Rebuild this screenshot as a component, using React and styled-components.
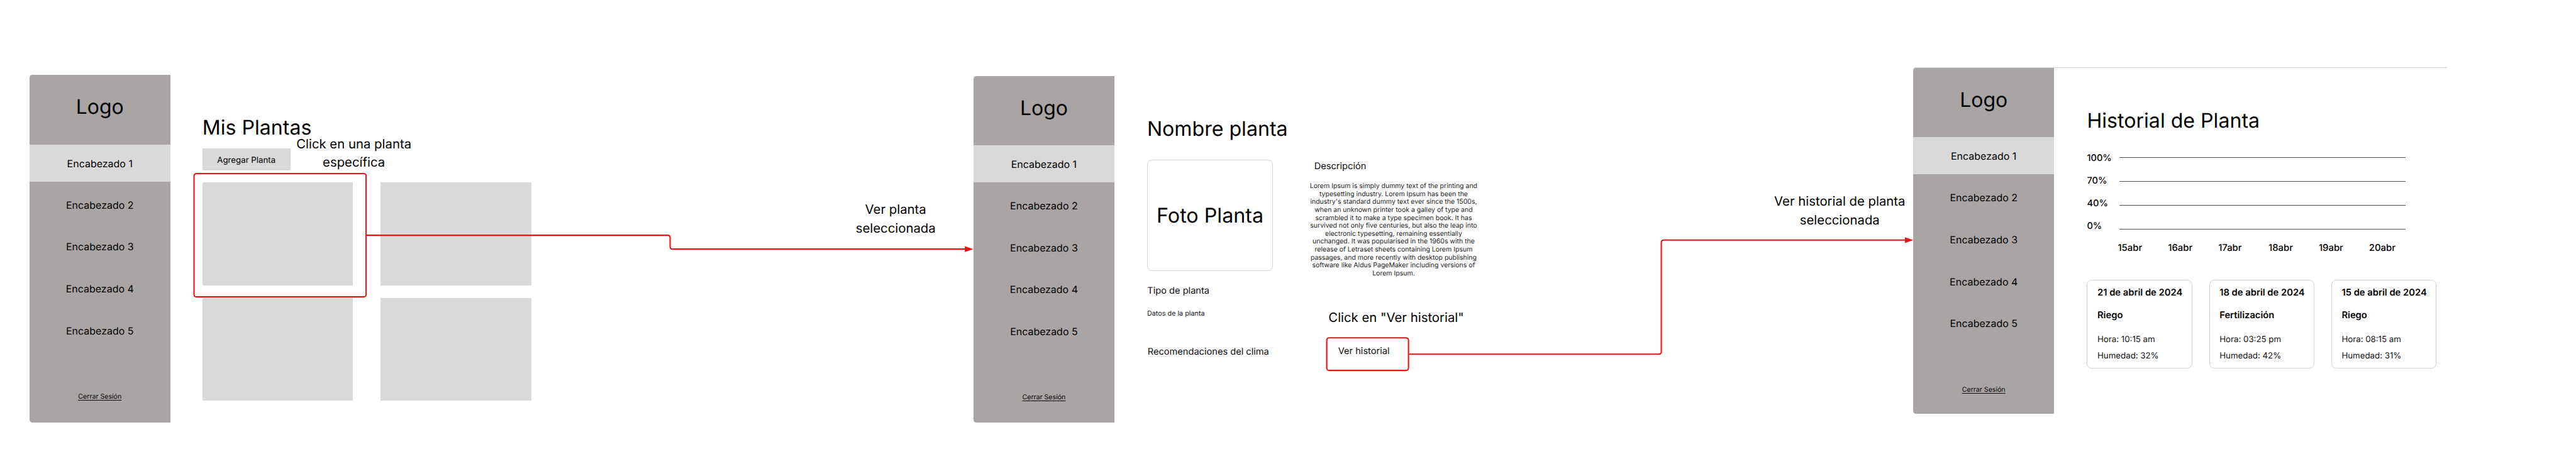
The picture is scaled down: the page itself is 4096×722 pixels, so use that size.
import React from "react";
import styled, { createGlobalStyle } from "styled-components";

/* Board units are drawn on a 6276 x 1107 canvas that fills a 4096px wide page. */
const u = (n) => `${((n * 4096) / 6276).toFixed(3)}px`;

const GlobalStyle = createGlobalStyle`
  * { box-sizing: border-box; }
  html, body { margin: 0; padding: 0; background: #fff; overflow: hidden; }
  body {
    font-family: Inter, "Liberation Sans", sans-serif;
    color: #000;
    text-rendering: geometricPrecision;
  }
  p, h1, h2, h3 { margin: 0; font-weight: 400; }
`;

const Board = styled.div`
  position: relative;
  display: flex;
  align-items: flex-start;
  width: 4096px;
  height: 722px;
  overflow: hidden;
  background: #fff;
`;

const Frame = styled.section`
  display: flex;
  flex: none;
  width: ${u(1300)};
  height: ${(p) => u(p.$height)};
  margin-top: ${(p) => u(p.$top)};
  margin-left: ${(p) => u(p.$gap)};
  border-top: ${(p) => (p.$outlined ? "1px solid #d4d4d4" : "none")};
  border-top-left-radius: ${u(7)};
`;

const SidebarPanel = styled.nav`
  display: flex;
  flex-direction: column;
  align-items: stretch;
  flex: none;
  width: ${u(342.6)};
  background: #a9a5a4;
  border-radius: ${u(7)} 0 0 ${u(7)};
  text-align: center;
`;

const Logo = styled.div`
  height: ${u(156)};
  margin-bottom: ${u(13)};
  font-size: ${u(49)};
  line-height: ${u(156)};
`;

const NavItem = styled.a`
  display: block;
  height: ${u(102)};
  font-size: ${u(24.5)};
  line-height: ${u(102)};
`;

const ActiveNavItem = styled(NavItem)`
  height: ${u(90.3)};
  margin-bottom: ${u(8.1)};
  padding-top: ${u(4.5)};
  line-height: ${u(85.8)};
  background: #d9d9d9;
`;

const Logout = styled.a`
  margin-top: ${u(98)};
  font-size: ${u(16.3)};
  line-height: ${u(20)};
  text-decoration: underline;
  text-decoration-thickness: 1px;
  text-underline-offset: 2px;
`;

const Main = styled.main`
  display: flex;
  flex-direction: column;
  align-items: flex-start;
  padding: ${u(98)} 0 0 ${(p) => u(p.$inset)};
`;

const Title = styled.h1`
  font-size: ${u(49.2)};
  line-height: ${u(60)};
  white-space: nowrap;
`;

const AddButton = styled.button`
  width: ${u(214.7)};
  height: ${u(53.8)};
  margin: ${u(20)} 0 ${u(30.2)};
  padding: ${u(6)} 0 0;
  border: 0;
  background: #d9d9d9;
  color: #000;
  font-family: inherit;
  font-size: ${u(20.35)};
  text-rendering: inherit;
`;

const PlantGrid = styled.div`
  display: grid;
  grid-template-columns: repeat(2, ${u(367)});
  grid-auto-rows: ${u(250.4)};
  gap: ${u(30.2)} ${u(67.6)};
`;

const PlantTile = styled.div`
  background: #d9d9d9;
`;

const Detail = styled.div`
  display: flex;
  gap: ${u(88.7)};
  margin-top: ${u(45.7)};
`;

const DetailColumn = styled.div`
  display: flex;
  flex-direction: column;
  align-items: flex-start;
  width: ${(p) => u(p.$width)};
  white-space: nowrap;
`;

const Photo = styled.div`
  display: flex;
  align-items: center;
  justify-content: center;
  width: ${u(307)};
  height: ${u(271.6)};
  border: 1px solid #d2d2d2;
  border-radius: ${u(12)};
  font-size: ${u(49.4)};
`;

const Field = styled.h2`
  margin-top: ${(p) => u(p.$above)};
  padding-left: ${(p) => u(p.$indent || 0)};
  font-size: ${u(22.4)};
  line-height: ${u(28)};
  color: #0a0a0a;
`;

const Note = styled.p`
  margin-top: ${u(31.3)};
  font-size: ${u(16.6)};
  line-height: ${u(20)};
  color: #151515;
`;

const Description = styled.p`
  width: ${u(410)};
  margin-top: ${u(26.6)};
  font-size: ${u(16.1)};
  line-height: ${u(19.33)};
  text-align: center;
  color: #1c1c1c;
`;

const DescriptionLine = styled.span`
  display: block;
`;

const Chart = styled.div`
  display: flex;
  margin-top: ${u(35.5)};
  font-size: ${u(22.3)};
  font-weight: 500;
`;

const Scale = styled.div`
  width: ${u(79.4)};
`;

const ScaleMark = styled.div`
  height: ${u(55)};
  line-height: ${u(55)};
`;

const GridLines = styled.div`
  width: ${u(697)};
  padding-top: ${u(24.6)};
`;

const GridLine = styled.div`
  height: ${u(58)};
  border-top: 1px solid #505050;

  &:last-child { height: 1px; }
`;

const Days = styled.div`
  display: grid;
  grid-template-columns: repeat(6, ${u(122.4)});
  margin-top: ${u(10.9)};
  padding-left: ${u(75)};
  font-size: ${u(22.8)};
  font-weight: 500;
  line-height: ${u(28)};
`;

const Events = styled.div`
  display: flex;
  gap: ${u(41.2)};
  margin-top: ${u(64.5)};
`;

const EventCard = styled.article`
  width: ${u(256.4)};
  height: ${u(215.8)};
  padding: ${u(15.2)} 0 0 ${u(23.8)};
  border: 1px solid #d2d2d2;
  border-radius: ${u(12)};
  white-space: nowrap;
`;

const EventHeading = styled.h3`
  margin-bottom: ${u(27.1)};
  font-size: ${u(22.6)};
  font-weight: 600;
  line-height: ${u(28)};
`;

const EventFact = styled.p`
  margin-top: ${(p) => u(p.$above)};
  font-size: ${u(20.35)};
  line-height: ${u(24)};
  color: #111;
`;

const Annotation = styled.div`
  position: absolute;
  top: ${(p) => u(p.$baseline - 33.9)};
  left: ${(p) => u(p.$center - 200)};
  width: ${u(400)};
  font-size: ${u(31.15)};
  line-height: ${u(45.3)};
  text-align: center;
  white-space: pre;
`;

const Flow = styled.svg`
  position: absolute;
  top: 0;
  left: 0;
  width: 4096px;
  height: 722.5px;
`;

const Sidebar = () => (
  <SidebarPanel>
    <Logo>Logo</Logo>
    <ActiveNavItem>Encabezado 1</ActiveNavItem>
    {[2, 3, 4, 5].map((n) => (
      <NavItem key={n}>Encabezado {n}</NavItem>
    ))}
    <Logout>Cerrar Sesión</Logout>
  </SidebarPanel>
);

const descriptionLines = [
  "Lorem Ipsum is simply dummy text of the printing and",
  "typesetting industry. Lorem Ipsum has been the",
  "industry's standard dummy text ever since the 1500s,",
  "when an unknown printer took a galley of type and",
  "scrambled it to make a type specimen book. It has",
  "survived not only five centuries, but also the leap into",
  "electronic typesetting, remaining essentially",
  "unchanged. It was popularised in the 1960s with the",
  "release of Letraset sheets containing Lorem Ipsum",
  "passages, and more recently with desktop publishing",
  "software like Aldus PageMaker including versions of",
  "Lorem Ipsum.",
];

const events = [
  { date: "21 de abril de 2024", kind: "Riego", time: "10:15 am", humidity: "32%" },
  { date: "18 de abril de 2024", kind: "Fertilización", time: "03:25 pm", humidity: "42%" },
  { date: "15 de abril de 2024", kind: "Riego", time: "08:15 am", humidity: "31%" },
];

const levels = ["100%", "70%", "40%", "0%"];
const days = ["15abr", "16abr", "17abr", "18abr", "19abr", "20abr"];

const PlantsFrame = () => (
  <Frame $top={183} $gap={72} $height={847}>
    <Sidebar />
    <Main $inset={78.3}>
      <Title>Mis Plantas</Title>
      <AddButton>Agregar Planta</AddButton>
      <PlantGrid>
        <PlantTile />
        <PlantTile />
        <PlantTile />
        <PlantTile />
      </PlantGrid>
    </Main>
  </Frame>
);

const PlantFrame = () => (
  <Frame $top={185.1} $gap={1000.1} $height={845}>
    <Sidebar />
    <Main $inset={80}>
      <Title>Nombre planta</Title>
      <Detail>
        <DetailColumn $width={307}>
          <Photo>Foto Planta</Photo>
          <Field $above={33.6} $indent={0.6}>Tipo de planta</Field>
          <Note>Datos de la planta</Note>
          <Field $above={68.8} $indent={1.2}>Recomendaciones del clima</Field>
        </DetailColumn>
        <DetailColumn $width={410}>
          <Field $above={1.2} $indent={11.6}>Descripción</Field>
          <Description>
            {descriptionLines.map((line) => (
              <DescriptionLine key={line}>{line}</DescriptionLine>
            ))}
          </Description>
          <Field $above={165.4} $indent={69.9}>Ver historial</Field>
        </DetailColumn>
      </Detail>
    </Main>
  </Frame>
);

const HistoryFrame = () => (
  <Frame $top={163.8} $gap={989.6} $height={844} $outlined>
    <Sidebar />
    <Main $inset={80.4}>
      <Title>Historial de Planta</Title>
      <Chart>
        <Scale>
          {levels.map((level) => (
            <ScaleMark key={level}>{level}</ScaleMark>
          ))}
        </Scale>
        <GridLines>
          {levels.map((level) => (
            <GridLine key={level} />
          ))}
        </GridLines>
      </Chart>
      <Days>
        {days.map((day) => (
          <span key={day}>{day}</span>
        ))}
      </Days>
      <Events>
        {events.map((e) => (
          <EventCard key={e.date}>
            <EventHeading>{e.date}</EventHeading>
            <EventHeading>{e.kind}</EventHeading>
            <EventFact $above={34}>Hora: {e.time}</EventFact>
            <EventFact $above={16.7}>Humedad: {e.humidity}</EventFact>
          </EventCard>
        ))}
      </Events>
    </Main>
  </Frame>
);

export default function App() {
  return (
    <>
      <GlobalStyle />
      <Board>
        <PlantsFrame />
        <PlantFrame />
        <HistoryFrame />
        <Flow viewBox="0 0 6276 1107" preserveAspectRatio="none">
          <g fill="none" stroke="#ea1313" strokeWidth="3.2">
            <rect x="472.7" y="422.8" width="419.2" height="300.6" rx="6" />
            <path d="M893 573.2H1626.6Q1632.6 573.2 1632.6 579.2V601Q1632.6 607 1638.6 607H2352" />
            <rect x="3232.4" y="823.1" width="199.2" height="79.6" rx="6" />
            <path d="M3433 863H4041.5Q4047.5 863 4047.5 857V591Q4047.5 585 4053.5 585H4643" />
          </g>
          <g fill="#ea1313">
            <path d="M2350.6 600L2371.4 607L2350.6 614Z" />
            <path d="M4641 578L4661.4 585L4641 592Z" />
          </g>
        </Flow>
        <Annotation $center={862.1} $baseline={361.5}>{"Click en una planta\nespecífica"}</Annotation>
        <Annotation $center={2182.2} $baseline={521.8}>{"Ver planta\nseleccionada"}</Annotation>
        <Annotation $center={3401.6} $baseline={784.3}>{'Click en "Ver historial"'}</Annotation>
        <Annotation $center={4482.2} $baseline={501.3}>{"Ver historial de planta\nseleccionada"}</Annotation>
      </Board>
    </>
  );
}
